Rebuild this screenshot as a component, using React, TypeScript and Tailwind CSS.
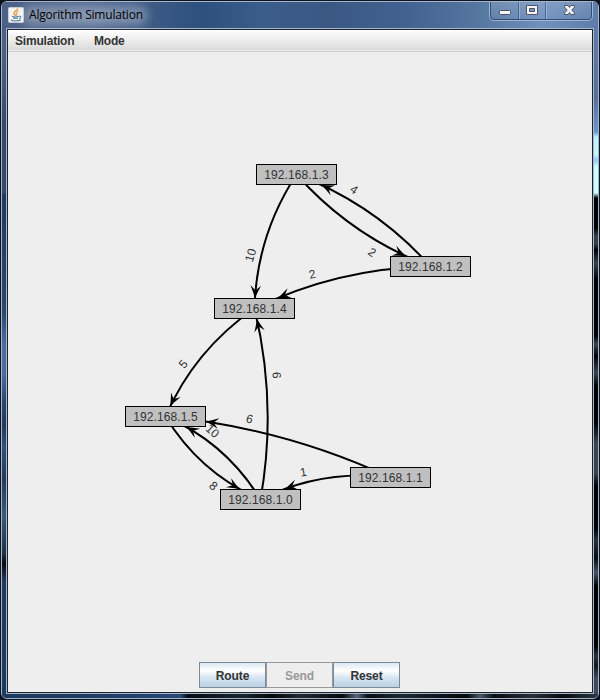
import React from "react";

type Pt = { x: number; y: number };

const W = 81;
const H = 21;

// Top-left corner of every node, relative to the canvas.
const nodes: Record<string, Pt> = {
  "192.168.1.3": { x: 248, y: 112 },
  "192.168.1.2": { x: 382, y: 204 },
  "192.168.1.4": { x: 206, y: 246 },
  "192.168.1.5": { x: 117, y: 354 },
  "192.168.1.0": { x: 212, y: 437 },
  "192.168.1.1": { x: 342, y: 415 },
};

type Edge = { from: string; to: string; cost: string; label: Pt; angle: number };

const edges: Edge[] = [
  { from: "3", to: "4", cost: "10", label: { x: 242.3, y: 203.2 }, angle: -72.6 },
  { from: "3", to: "2", cost: "2", label: { x: 364.3, y: 200 }, angle: 34.5 },
  { from: "2", to: "3", cost: "4", label: { x: 346.3, y: 137.3 }, angle: 34.5 },
  { from: "2", to: "4", cost: "2", label: { x: 304.3, y: 222 }, angle: -13.4 },
  { from: "4", to: "5", cost: "5", label: { x: 175, y: 312 }, angle: -50.5 },
  { from: "0", to: "4", cost: "6", label: { x: 269, y: 323.3 }, angle: 88.2 },
  { from: "0", to: "5", cost: "10", label: { x: 204.5, y: 379 }, angle: 41.1 },
  { from: "5", to: "0", cost: "8", label: { x: 205.7, y: 433.7 }, angle: 41.1 },
  { from: "1", to: "5", cost: "6", label: { x: 241.7, y: 366.8 }, angle: 15.2 },
  { from: "1", to: "0", cost: "1", label: { x: 295.3, y: 420 }, angle: -9.6 },
];

const center = (id: string): Pt => {
  const n = nodes["192.168.1." + id];
  return { x: n.x + W / 2, y: n.y + H / 2 };
};

// Quadratic curve between two node centres, bowed 20px to its right-hand side,
// with the arrow placed where the curve enters the target box.
function route(e: Edge) {
  const a = center(e.from);
  const b = center(e.to);
  const dx = b.x - a.x;
  const dy = b.y - a.y;
  const len = Math.hypot(dx, dy);
  const c = {
    x: (a.x + b.x) / 2 - (dy / len) * 20,
    y: (a.y + b.y) / 2 + (dx / len) * 20,
  };
  const at = (t: number): Pt => ({
    x: (1 - t) * (1 - t) * a.x + 2 * t * (1 - t) * c.x + t * t * b.x,
    y: (1 - t) * (1 - t) * a.y + 2 * t * (1 - t) * c.y + t * t * b.y,
  });
  let t = 1;
  while (t > 0) {
    const p = at(t);
    if (Math.abs(p.x - b.x) > W / 2 || Math.abs(p.y - b.y) > H / 2) break;
    t -= 0.001;
  }
  const tip = at(t);
  const tx = 2 * (1 - t) * (c.x - a.x) + 2 * t * (b.x - c.x);
  const ty = 2 * (1 - t) * (c.y - a.y) + 2 * t * (b.y - c.y);
  return {
    d: `M${a.x} ${a.y}Q${c.x} ${c.y} ${b.x} ${b.y}`,
    arrow: `translate(${tip.x} ${tip.y}) rotate(${(Math.atan2(ty, tx) * 180) / Math.PI})`,
  };
}

function Graph() {
  return (
    <div className="relative min-h-0 flex-1 overflow-hidden">
      <svg width="584" height="606" className="absolute left-0 top-0">
        {edges.map((e, i) => {
          const r = route(e);
          return (
            <g key={i}>
              <path d={r.d} fill="none" stroke="#000" strokeWidth="2" />
              <path d="M0 0Q-6 -2.4 -12.5 -5.3L-7.5 0L-12.5 5.3Q-6 2.4 0 0Z" fill="#000" transform={r.arrow} />
            </g>
          );
        })}
        {edges.map((e, i) => (
          <text
            key={i}
            textAnchor="middle"
            y="4.3"
            fontSize="12"
            fill="#333"
            fontFamily="'Liberation Sans', Arial, sans-serif"
            transform={`translate(${e.label.x} ${e.label.y}) rotate(${e.angle})`}
          >
            {e.cost}
          </text>
        ))}
      </svg>
      {Object.entries(nodes).map(([name, p]) => (
        <div
          key={name}
          className="absolute flex h-[21px] w-[81px] items-center justify-center border border-black bg-[#c0c0c0] text-[12px] leading-none tracking-[0.1px] text-[#333]"
          style={{ left: p.x, top: p.y }}
        >
          <span>{name}</span>
        </div>
      ))}
    </div>
  );
}

function JavaIcon() {
  return (
    <svg width="16" height="16" viewBox="0 0 16 16" className="shrink-0">
      <rect x="0.5" y="0.5" width="15" height="15" rx="1" fill="#f4f4f2" stroke="#c9cdd2" />
      <path d="M9.5 1.5C10 3.5 5.5 4.5 6 6.5C6.2 7.5 7.3 8 7.5 8.8" fill="none" stroke="#e8862e" strokeWidth="1.3" />
      <path d="M10.7 4C8.5 5 7.8 5.8 8.7 7C9.2 7.8 8.8 8.3 8.4 8.8" fill="none" stroke="#e8862e" strokeWidth="1" />
      <path d="M4 9.3C5.5 10 9 10 11 9.3M5 11.3H10M11.3 9.3C13.5 8.8 13 11 11 11.5M3 13C5 14.3 10.5 14.3 13 12.8" fill="none" stroke="#4f7f9c" strokeWidth="1.1" />
    </svg>
  );
}

function WindowControls() {
  return (
    <svg width="106" height="21" viewBox="0 0 106 21" className="absolute right-[3px] top-[-1px]">
      <defs>
        <linearGradient id="cap" x1="0" y1="0" x2="0" y2="1">
          <stop offset="0" stopColor="#fff" stopOpacity=".14" />
          <stop offset="1" stopColor="#fff" stopOpacity=".03" />
        </linearGradient>
      </defs>
      <path d="M0.5 1V15.5Q0.5 19.5 4.5 19.5H99.5Q103.5 19.5 103.5 15.5V1" fill="url(#cap)" stroke="#b3c4dc" strokeOpacity=".75" />
      <path d="M1.5 1V15.5Q1.5 18.5 4.5 18.5H99.5Q102.5 18.5 102.5 15.5V1" fill="none" stroke="#263f68" strokeOpacity=".8" />
      <g transform="translate(-1 -1)">
        <path d="M30.5 2V19M57.5 2V19" stroke="#2d466e" strokeOpacity=".6" />
        <path d="M31.5 2V19M58.5 2V19" stroke="#b3c4dc" strokeOpacity=".6" />
        <rect x="11.5" y="10.5" width="11" height="4" rx="1" fill="#f4f4f4" stroke="#4d5365" />
        <path d="M38.5 5.5h11v9h-11zM41.5 8.5v3h5v-3z" fillRule="evenodd" fill="#f4f4f4" stroke="#4d5365" />
        <path d="M76.5 5.5H80L81.5 7.5L83 5.5H86.5V7L83.8 10L86.5 13V14.5H83L81.5 12.5L80 14.5H76.5V13L79.2 10L76.5 7Z" fill="#f4f4f4" stroke="#4d5365" />
      </g>
    </svg>
  );
}

function TitleBar() {
  return (
    <div className="relative flex h-[26px] shrink-0 items-center bg-[linear-gradient(90deg,#4c6187_0px,#536b91_90px,#3d5a85_150px,#2d507d_200px,#3b5d8a_260px,#3a5882_325px,#41618f_400px,#55769f_475px,#7090bd_540px,#5d7cab_598px)] pl-[6px]">
      <div className="absolute left-[20px] top-[4px] h-[19px] w-[126px] rounded-full bg-white/30 blur-[5px]" />
      <div className="relative flex items-center gap-[5px]">
        <JavaIcon />
        <span className="whitespace-nowrap font-['Open_Sans','Noto_Sans',sans-serif] text-[12px] leading-[16px] tracking-[-0.2px] text-black">
          Algorithm Simulation
        </span>
      </div>
      <WindowControls />
    </div>
  );
}

const actionClass =
  "h-[26px] w-[67px] border border-[#7a8a99] bg-[linear-gradient(180deg,#dde8f3_0%,#ffffff_32%,#dbe7f2_58%,#b8cfe5_100%)] pl-px text-center text-[12px] font-bold leading-[26px] tracking-[-0.1px] text-[#333]";

export default function App() {
  return (
    <div className="h-[700px] w-[600px] overflow-hidden bg-[#0b1422] p-px font-['Liberation_Sans',Arial,sans-serif]">
      <div className="flex h-[698px] w-[598px] flex-col overflow-hidden rounded-[6px] border border-[#a9b6c8]">
        <TitleBar />
        <div className="flex h-[666px] shrink-0">
          <div className="w-[4px] shrink-0 bg-[linear-gradient(180deg,#4b6188_0px,#4b5f80_30px,#35496b_100px,#35496b_165px,#1f3a5e_166px,#2c4870_285px,#4a6da1_315px,#4a6da1_345px,#2b4670_375px,#243a5c_398px,#30527d_418px,#233a5c_450px,#3b5a7a_487px,#1f3244_525px,#090b10_535px,#1f3a5f_553px,#1c3a5e_666px)]" />
          <div className="flex h-[666px] w-[588px] shrink-0 border border-[#a9b6c8]">
            <div className="flex h-[664px] w-[586px] flex-col border border-[#1a2431] bg-[#eeeeee]">
              <div className="flex h-[20px] shrink-0 items-center gap-[20px] bg-[linear-gradient(180deg,#ffffff,#dadada)] pl-[7px] pt-[2px] text-[12px] font-bold leading-none tracking-[-0.2px] text-[#333]">
                <span className="w-[59px]">Simulation</span>
                <span>Mode</span>
              </div>
              <div className="mt-px h-px shrink-0 bg-[#cccccc]" />
              <Graph />
              <div className="flex h-[34px] shrink-0 justify-center pr-[2px] pt-[4px]">
                <button className={actionClass}>Route</button>
                <button className="h-[26px] w-[67px] border border-[#999] bg-[#eee] pl-px text-center text-[12px] font-bold leading-[26px] tracking-[-0.1px] text-[#999]">
                  Send
                </button>
                <button className={actionClass}>Reset</button>
              </div>
            </div>
          </div>
          <div className="w-[4px] shrink-0 bg-[linear-gradient(180deg,#5d7cab_0px,#5a75a0_40px,#56709c_70px,#6d96cc_104px,#c0efff_109px,#c8f7ff_126px,#94c8fa_132px,#d0ffff_139px,#d0ffff_165px,#000_170px,#000_200px,#3a3f44_208px,#3a3f44_216px,#000_222px,#3a4048_235px,#000_252px,#000_308px,#3c444c_316px,#000_328px,#3c444c_345px,#000_358px,#000_395px,#3c444c_415px,#3c444c_445px,#000_458px,#000_500px,#2a3038_512px,#0a0b0d_530px,#4a5260_545px,#000_558px,#000_618px,#2c3236_628px,#10161c_638px,#3c4a5a_650px,#3c4a5a_666px)]" />
        </div>
        <div className="h-[4px] shrink-0 bg-[linear-gradient(90deg,#1c3a5e_0px,#1c3a5e_60px,#234371_150px,#2b4a78_178px,#080c14_186px,#1b2530_240px,#050609_270px,#232b35_300px,#05070a_340px,#56677c_355px,#0a0d12_366px,#1f2833_400px,#05070a_465px,#4a5868_478px,#080a0e_492px,#28303a_530px,#080a0e_560px,#2c3a48_598px)]" />
      </div>
    </div>
  );
}
